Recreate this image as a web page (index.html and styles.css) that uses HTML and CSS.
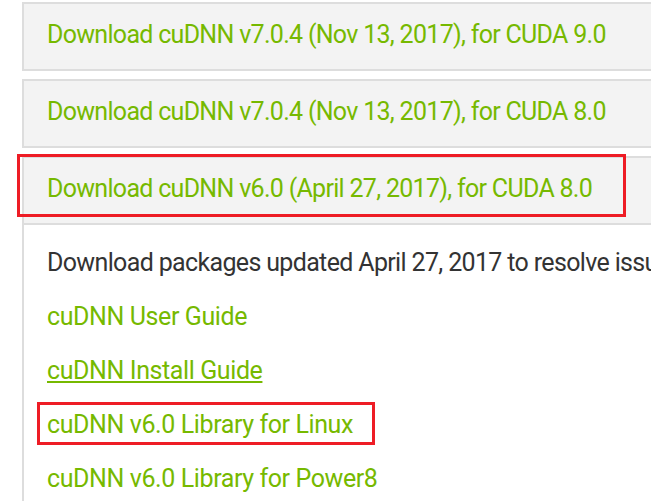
FILE: index.html
```html
<!DOCTYPE html>
<html>
<head>
<meta charset="utf-8">
<link rel="stylesheet" href="styles.css">
</head>
<body>
<div class="accordion">
  <div class="panel">
    <div class="panel-head">
      <a class="panel-title" href="#">Download cuDNN v7.0.4 (Nov 13, 2017), for CUDA 9.0</a>
    </div>
  </div>
  <div class="panel">
    <div class="panel-head">
      <a class="panel-title" href="#">Download cuDNN v7.0.4 (Nov 13, 2017), for CUDA 8.0</a>
    </div>
  </div>
  <div class="panel">
    <div class="panel-head">
      <a class="panel-title" href="#">Download cuDNN v6.0 (April 27, 2017), for CUDA 8.0</a>
      <span class="mark mark-head"></span>
    </div>
    <div class="panel-body">
      <p class="line text">Download packages updated April 27, 2017 to resolve issues</p>
      <p class="line"><a class="link" href="#">cuDNN User Guide</a></p>
      <p class="line"><a class="link underlined" href="#">cuDNN Install Guide</a></p>
      <p class="line"><span class="marked"><a class="link" href="#">cuDNN v6.0 Library for Linux</a><span class="mark mark-link"></span></span></p>
      <p class="line"><a class="link" href="#">cuDNN v6.0 Library for Power8</a></p>
    </div>
  </div>
</div>
</body>
</html>
```
FILE: styles.css
```css
html, body {
  margin: 0;
  padding: 0;
  background: #ffffff;
  overflow: hidden;
  width: 651px;
  height: 501px;
}
body {
  font-family: Roboto, "Liberation Sans", sans-serif;
  font-size: 25px;
  letter-spacing: -0.45px;
}
.accordion {
  margin: 2px 0 0 22px;
  width: 720px;
}
.panel {
  margin-bottom: 8px;
}
.panel-head {
  position: relative;
  background: #f3f3f3;
  border: 2px solid #dddddd;
  padding: 16px 0 0 23px;
  box-sizing: content-box;
  height: 49px;
}
.panel-title {
  display: block;
  color: #76b900;
  text-decoration: none;
  line-height: 29px;
  white-space: nowrap;
  letter-spacing: -0.7px;
}
.panel-body {
  border-left: 2px solid #dddddd;
  border-right: 2px solid #dddddd;
  padding: 11px 0 0 23px;
}
.line {
  margin: 0;
  line-height: 54px;
  white-space: nowrap;
}
.text {
  color: #333333;
  letter-spacing: -0.65px;
}
.link {
  color: #76b900;
  text-decoration: none;
  letter-spacing: -0.4px;
}
.underlined {
  text-decoration: underline;
  text-decoration-thickness: 2px;
  text-underline-offset: 2px;
}
.marked {
  position: relative;
  display: inline-block;
}
.mark {
  position: absolute;
  border: 3px solid #ee1c25;
  pointer-events: none;
}
.mark-head {
  left: -7px;
  top: -4px;
  width: 603px;
  height: 57px;
}
.mark-link {
  left: -10px;
  top: 4px;
  width: 332px;
  height: 37px;
}
```
